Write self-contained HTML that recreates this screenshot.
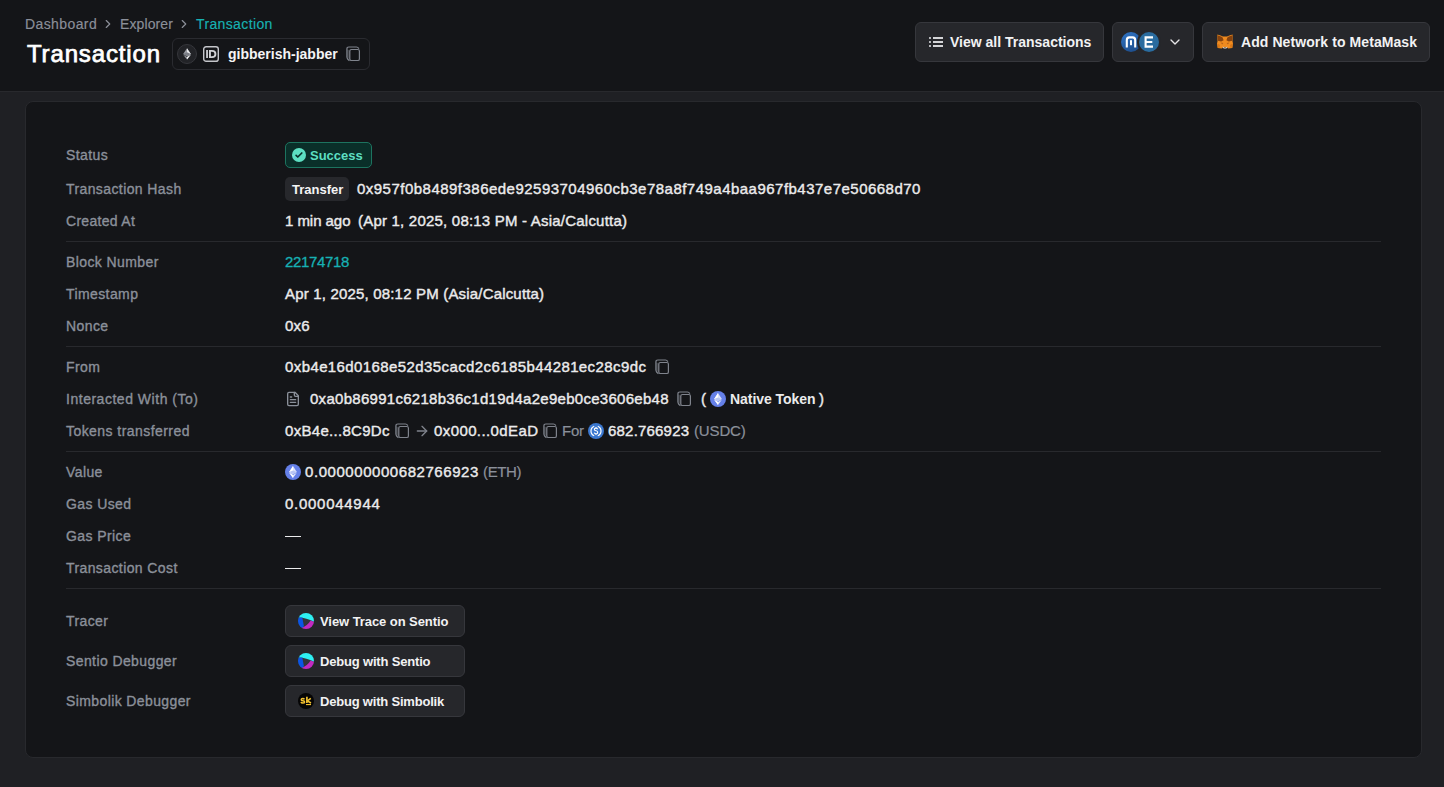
<!DOCTYPE html>
<html><head><meta charset="utf-8">
<style>
*{margin:0;padding:0;box-sizing:border-box}
html,body{width:1444px;height:787px;overflow:hidden;background:#1f2024;font-family:"Liberation Sans",sans-serif;color:#ececec}
.a{position:absolute;white-space:nowrap}
#hdr{position:absolute;left:0;top:0;width:1444px;height:92px;background:#141518;border-bottom:1px solid #28292d}
#card{position:absolute;left:25px;top:101px;width:1397px;height:657px;background:#141518;border:1px solid #28292d;border-radius:8px}
.crumb{font-size:14px;line-height:20px;color:#8b8f98;-webkit-text-stroke:0.15px #8b8f98}
.btn{position:absolute;top:22px;height:40px;background:#26272b;border:1px solid #36373c;border-radius:6px}
.btxt{font-size:14px;font-weight:bold;line-height:20px;color:#f2f2f3}
.lbl{font-size:14px;line-height:20px;color:#8b909a;-webkit-text-stroke:0.35px #8b909a}
.val{font-size:14px;line-height:20px;color:#ebebec;-webkit-text-stroke:0.4px #ebebec}
.mono{font-family:"Liberation Mono",monospace;font-size:14px;line-height:20px;color:#ebebec;-webkit-text-stroke:0.2px #ebebec}
.sep{position:absolute;left:66px;width:1315px;height:1px;background:#28292d}
.gray{color:#8b909a;-webkit-text-stroke:0.2px #8b909a}
.tbtn{position:absolute;left:285px;width:180px;height:32px;background:#26272b;border:1px solid #36373c;border-radius:6px}
</style></head><body>
<div id="hdr"></div>

<div class="a crumb" style="left:25px;top:14px;letter-spacing:0.4px">Dashboard</div>
<svg class="a" style="left:101px;top:17px" width="14" height="14" viewBox="0 0 24 24" fill="none" stroke="#8b8f98" stroke-width="2" stroke-linecap="round" stroke-linejoin="round"><path d="m9 18 6-6-6-6"/></svg>
<div class="a crumb" style="left:120px;top:14px;letter-spacing:0.1px">Explorer</div>
<svg class="a" style="left:177px;top:17px" width="14" height="14" viewBox="0 0 24 24" fill="none" stroke="#8b8f98" stroke-width="2" stroke-linecap="round" stroke-linejoin="round"><path d="m9 18 6-6-6-6"/></svg>
<div class="a crumb" style="left:196px;top:14px;color:#17b1b3;-webkit-text-stroke:0.15px #17b1b3;letter-spacing:0.37px">Transaction</div>
<div class="a" style="left:27px;top:39px;font-size:24px;line-height:30px;color:#fff;-webkit-text-stroke:0.75px #fff;letter-spacing:0.85px">Transaction</div>
<div class="a" style="left:172px;top:38px;width:198px;height:32px;border:1px solid #2a2b30;border-radius:6px"></div>
<div class="a" style="left:177px;top:44px;width:20px;height:20px;border-radius:50%;background:#222327;border:1px solid #35363b"></div>
<svg class="a" style="left:183px;top:48px" width="8" height="12" viewBox="0 0 8 12"><path d="M4 0.3 L7.8 6 L4 8.2 L0.2 6 Z" fill="#9a9ca3"/><path d="M4 0.3 L7.8 6 L4 8.2 Z" fill="#e8e9ec"/><path d="M4 8.9 L7.8 6.7 L4 11.6 L0.2 6.7 Z" fill="#9a9ca3"/><path d="M4 8.9 L7.8 6.7 L4 11.6 Z" fill="#f2f2f4"/><path d="M0.2 6 L4 4.3 L7.8 6 L4 8.2 Z" fill="#7b7e86"/></svg>
<svg class="a" style="left:203px;top:46px" width="16" height="16" viewBox="0 0 16 16"><rect x="0.7" y="0.7" width="14.6" height="14.6" rx="2.4" fill="none" stroke="#c4c5ca" stroke-width="1.4"/><rect x="3.1" y="4" width="1.9" height="8" fill="#c4c5ca"/><path d="M6 4 H9 Q13.4 4 13.4 8 Q13.4 12 9 12 H6 Z M7.9 5.8 V10.2 H9 Q11.5 10.2 11.5 8 Q11.5 5.8 9 5.8 Z" fill="#d0d1d5" fill-rule="evenodd"/></svg>
<div class="a btxt" style="left:228px;top:44px;color:#f4f4f5">gibberish-jabber</div>
<svg class="a" style="left:345px;top:46px" width="16" height="16" viewBox="0 0 16 16" fill="none" stroke="#7f838c" stroke-width="1.2" stroke-linejoin="round"><path d="M1.9 3.2 L4.8 4.6 V13.6 L1.9 11.4 Z" fill="#7f838c" fill-opacity="0.35" stroke="none"/><path d="M1.9 11.4 V3 Q1.9 1 3.9 1 H11.4 Q12.8 1 13.9 2.6"/><path d="M1.9 11.4 Q2.2 13.2 4.4 14.8"/><rect x="4.8" y="3.5" width="9.6" height="11" rx="1.6" fill="#141518"/></svg>
<div class="btn" style="left:915px;width:189px"></div>
<svg class="a" style="left:927px;top:34px" width="18" height="16" viewBox="0 0 18 16"><rect x="2" y="3" width="2" height="2" fill="#b4b5b9"/><rect x="2" y="7" width="2" height="2" fill="#b4b5b9"/><rect x="2" y="11" width="2" height="2" fill="#b4b5b9"/><rect x="6" y="3" width="10" height="2" fill="#d4d5d8"/><rect x="6" y="7" width="10" height="2" fill="#d4d5d8"/><rect x="6" y="11" width="10" height="2" fill="#d4d5d8"/></svg>
<div class="a btxt" style="left:950px;top:32px">View all Transactions</div>
<div class="btn" style="left:1112px;width:82px"></div>
<div class="a" style="left:1121px;top:32px;width:20px;height:20px;border-radius:50%;background:linear-gradient(160deg,#2f74c6,#1c4a86)"></div>
<svg class="a" style="left:1121px;top:32px" width="20" height="20" viewBox="0 0 20 20"><path d="M5.8 15.5 V8.2 Q5.8 5.4 8.3 5.4 H11.7 Q14.2 5.4 14.2 8.2 V15.5" fill="none" stroke="#fff" stroke-width="2.1"/><rect x="9" y="8.2" width="2" height="5" fill="#fff"/></svg>
<div class="a" style="left:1137px;top:30px;width:24px;height:24px;border-radius:50%;background:#26272b"></div>
<div class="a" style="left:1139px;top:32px;width:20px;height:20px;border-radius:50%;background:#2a6c9f"></div>
<svg class="a" style="left:1139px;top:32px" width="20" height="20" viewBox="0 0 20 20"><path d="M14 5.4 H6.6 V14.6 H14 M6.6 10 H13.3" fill="none" stroke="#fff" stroke-width="2.1"/></svg>
<svg class="a" style="left:1167px;top:34px" width="16" height="16" viewBox="0 0 24 24" fill="none" stroke="#e6e6e8" stroke-width="2" stroke-linecap="round" stroke-linejoin="round"><path d="m6 9 6 6 6-6"/></svg>
<div class="btn" style="left:1202px;width:228px"></div>
<svg class="a" style="left:1217px;top:34px" width="16" height="15" viewBox="0 0 16 15">
<path d="M0.4 0.4 Q4 1.2 6 2.6 H10 Q12 1.2 15.6 0.4 L15.5 7.2 L16 9.4 L15.3 14 L11.3 14.5 L9.8 13.2 H6.2 L4.7 14.5 L0.7 14 L0 9.4 L0.5 7.2 Z" fill="#ef8b1f"/>
<path d="M0.6 1.2 Q3.5 2.2 5.6 3.6 L6.6 6.2 L4.2 7.4 L0.8 6.8 Z" fill="#86430f"/><path d="M15.4 1.2 Q12.5 2.2 10.4 3.6 L9.4 6.2 L11.8 7.4 L15.2 6.8 Z" fill="#86430f"/>
<path d="M3.6 8.6 L6.4 8.9 L5.2 10.6 Z" fill="#b8641a"/><path d="M12.4 8.6 L9.6 8.9 L10.8 10.6 Z" fill="#b8641a"/>
<path d="M0.4 9.6 L3 11 L2.6 13.8 L0.7 13.8 Z" fill="#d97716"/><path d="M15.6 9.6 L13 11 L13.4 13.8 L15.3 13.8 Z" fill="#d97716"/>
<path d="M5.6 12.5 Q8 14.8 10.4 12.5 L10 13.9 Q8 15.2 6 13.9 Z" fill="#e3d9cf"/>
</svg>
<div class="a btxt" style="left:1241px;top:32px;letter-spacing:0.08px">Add Network to MetaMask</div>
<div id="card"></div>
<div class="a lbl" style="left:66px;top:145px;letter-spacing:0.4px">Status</div>
<div class="a lbl" style="left:66px;top:179px;letter-spacing:0.4px">Transaction Hash</div>
<div class="a lbl" style="left:66px;top:211px;letter-spacing:0.3px">Created At</div>
<div class="a lbl" style="left:66px;top:252px;letter-spacing:0.4px">Block Number</div>
<div class="a lbl" style="left:66px;top:284px;letter-spacing:0.4px">Timestamp</div>
<div class="a lbl" style="left:66px;top:316px;letter-spacing:0.4px">Nonce</div>
<div class="a lbl" style="left:66px;top:357px;letter-spacing:0.4px">From</div>
<div class="a lbl" style="left:66px;top:389px;letter-spacing:0.52px">Interacted With (To)</div>
<div class="a lbl" style="left:66px;top:421px;letter-spacing:0.44px">Tokens transferred</div>
<div class="a lbl" style="left:66px;top:462px;letter-spacing:0.4px">Value</div>
<div class="a lbl" style="left:66px;top:494px;letter-spacing:0.4px">Gas Used</div>
<div class="a lbl" style="left:66px;top:526px;letter-spacing:0.4px">Gas Price</div>
<div class="a lbl" style="left:66px;top:558px;letter-spacing:0.4px">Transaction Cost</div>
<div class="a lbl" style="left:66px;top:611px;letter-spacing:0.4px">Tracer</div>
<div class="a lbl" style="left:66px;top:651px;letter-spacing:0.4px">Sentio Debugger</div>
<div class="a lbl" style="left:66px;top:691px;letter-spacing:0.39px">Simbolik Debugger</div>
<div class="sep" style="top:241px"></div>
<div class="sep" style="top:346px"></div>
<div class="sep" style="top:451px"></div>
<div class="sep" style="top:588px"></div>
<div class="a" style="left:285px;top:142px;width:87px;height:26px;background:#0a2f29;border:1px solid #1d735f;border-radius:5px"></div>
<svg class="a" style="left:292px;top:148px" width="14" height="14" viewBox="0 0 14 14"><circle cx="7" cy="7" r="7" fill="#5ddfc2"/><path d="M4.1 7.4 L5.8 9 L9.8 5" fill="none" stroke="#0a2f29" stroke-width="1.7" stroke-linecap="round" stroke-linejoin="round"/></svg>
<div class="a" style="left:310px;top:146px;font-size:13px;line-height:20px;font-weight:bold;color:#5ddfc2">Success</div>
<div class="a" style="left:285px;top:177px;width:64px;height:24px;background:#27282c;border-radius:5px"></div>
<div class="a" style="left:292px;top:180px;font-size:13px;line-height:20px;font-weight:bold;color:#f4f4f5">Transfer</div>
<div class="a val" style="left:357px;top:179px;font-size:15px;letter-spacing:0.48px">0x957f0b8489f386ede92593704960cb3e78a8f749a4baa967fb437e7e50668d70</div>
<div class="a val" style="left:285px;top:211px;font-size:15px;letter-spacing:-0.05px;">1 min ago</div>
<div class="a val" style="left:358px;top:211px;font-size:15px;letter-spacing:0.21px;">(Apr 1, 2025, 08:13 PM - Asia/Calcutta)</div>
<div class="a val" style="left:285px;top:252px;font-size:15px;letter-spacing:-0.33px;color:#17b1b3;-webkit-text-stroke:0.3px #17b1b3">22174718</div>
<div class="a val" style="left:285px;top:284px;font-size:15px;letter-spacing:0.18px;">Apr 1, 2025, 08:12 PM (Asia/Calcutta)</div>
<div class="a val" style="left:285px;top:316px;font-size:15px;letter-spacing:0.25px;">0x6</div>
<div class="a val" style="left:285px;top:357px;font-size:15px;letter-spacing:0.4px;">0xb4e16d0168e52d35cacd2c6185b44281ec28c9dc</div>
<svg class="a" style="left:654px;top:359px" width="16" height="16" viewBox="0 0 16 16" fill="none" stroke="#7f838c" stroke-width="1.2" stroke-linejoin="round"><path d="M1.9 3.2 L4.8 4.6 V13.6 L1.9 11.4 Z" fill="#7f838c" fill-opacity="0.35" stroke="none"/><path d="M1.9 11.4 V3 Q1.9 1 3.9 1 H11.4 Q12.8 1 13.9 2.6"/><path d="M1.9 11.4 Q2.2 13.2 4.4 14.8"/><rect x="4.8" y="3.5" width="9.6" height="11" rx="1.6" fill="#141518"/></svg>
<svg class="a" style="left:285px;top:391px" width="16" height="16" viewBox="0 0 24 24" fill="none" stroke="#8b909a" stroke-width="2" stroke-linecap="round" stroke-linejoin="round"><path d="M15 2H6a2 2 0 0 0-2 2v16a2 2 0 0 0 2 2h12a2 2 0 0 0 2-2V7Z"/><path d="M14 2v4a2 2 0 0 0 2 2h4"/><path d="M10 9H8"/><path d="M16 13H8"/><path d="M16 17H8"/></svg>
<div class="a val" style="left:310px;top:389px;font-size:15px;letter-spacing:0.28px;">0xa0b86991c6218b36c1d19d4a2e9eb0ce3606eb48</div>
<svg class="a" style="left:676px;top:391px" width="16" height="16" viewBox="0 0 16 16" fill="none" stroke="#7f838c" stroke-width="1.2" stroke-linejoin="round"><path d="M1.9 3.2 L4.8 4.6 V13.6 L1.9 11.4 Z" fill="#7f838c" fill-opacity="0.35" stroke="none"/><path d="M1.9 11.4 V3 Q1.9 1 3.9 1 H11.4 Q12.8 1 13.9 2.6"/><path d="M1.9 11.4 Q2.2 13.2 4.4 14.8"/><rect x="4.8" y="3.5" width="9.6" height="11" rx="1.6" fill="#141518"/></svg>
<div class="a val" style="left:701px;top:389px;font-size:15px">(</div>
<svg class="a" style="left:710px;top:391px" width="16" height="16" viewBox="0 0 16 16"><circle cx="8" cy="8" r="8" fill="#6580e8"/><path d="M8 2 L11.8 8.1 L8 10.3 L4.2 8.1 Z" fill="#dfe5fb"/><path d="M8 2 L4.2 8.1 L8 10.3 Z" fill="#fff"/><path d="M8 11 L11.8 8.8 L8 13.9 L4.2 8.8 Z" fill="#e4e9fc"/><path d="M8 11 L4.2 8.8 L8 13.9 Z" fill="#fff"/><path d="M4.2 8.1 L8 6.4 L11.8 8.1 L8 10.3 Z" fill="#b9c6f5"/></svg>
<div class="a val" style="left:730px;top:389px;font-weight:bold;-webkit-text-stroke:0;letter-spacing:-0.05px">Native Token</div>
<div class="a val" style="left:819px;top:389px;font-size:15px">)</div>
<div class="a val" style="left:285px;top:421px;font-size:15px;letter-spacing:0.3px;">0xB4e...8C9Dc</div>
<svg class="a" style="left:394px;top:423px" width="16" height="16" viewBox="0 0 16 16" fill="none" stroke="#7f838c" stroke-width="1.2" stroke-linejoin="round"><path d="M1.9 3.2 L4.8 4.6 V13.6 L1.9 11.4 Z" fill="#7f838c" fill-opacity="0.35" stroke="none"/><path d="M1.9 11.4 V3 Q1.9 1 3.9 1 H11.4 Q12.8 1 13.9 2.6"/><path d="M1.9 11.4 Q2.2 13.2 4.4 14.8"/><rect x="4.8" y="3.5" width="9.6" height="11" rx="1.6" fill="#141518"/></svg>
<svg class="a" style="left:414px;top:423px" width="16" height="16" viewBox="0 0 24 24" fill="none" stroke="#7f838c" stroke-width="2" stroke-linecap="round" stroke-linejoin="round"><path d="M5 12h14"/><path d="m12 5 7 7-7 7"/></svg>
<div class="a val" style="left:434px;top:421px;font-size:15px;letter-spacing:0.4px;">0x000...0dEaD</div>
<svg class="a" style="left:542px;top:423px" width="16" height="16" viewBox="0 0 16 16" fill="none" stroke="#7f838c" stroke-width="1.2" stroke-linejoin="round"><path d="M1.9 3.2 L4.8 4.6 V13.6 L1.9 11.4 Z" fill="#7f838c" fill-opacity="0.35" stroke="none"/><path d="M1.9 11.4 V3 Q1.9 1 3.9 1 H11.4 Q12.8 1 13.9 2.6"/><path d="M1.9 11.4 Q2.2 13.2 4.4 14.8"/><rect x="4.8" y="3.5" width="9.6" height="11" rx="1.6" fill="#141518"/></svg>
<div class="a val gray" style="left:562px;top:421px;font-size:15px;letter-spacing:-0.2px;">For</div>
<svg class="a" style="left:588px;top:423px" width="16" height="16" viewBox="0 0 16 16"><circle cx="8" cy="8" r="8" fill="#3b78d0"/><path d="M6.2 3.2 A5.2 5.2 0 0 0 6.2 12.8" fill="none" stroke="#fff" stroke-width="1.2"/><path d="M9.8 3.2 A5.2 5.2 0 0 1 9.8 12.8" fill="none" stroke="#fff" stroke-width="1.2"/><path d="M9.6 6.2 Q9.2 5.1 8 5.1 Q6.4 5.1 6.4 6.4 Q6.4 7.5 8 7.8 Q9.7 8.1 9.7 9.4 Q9.7 10.8 8 10.8 Q6.6 10.8 6.3 9.7 M8 4.1 V5.1 M8 10.8 V11.9" fill="none" stroke="#fff" stroke-width="1.1"/></svg>
<div class="a val" style="left:608px;top:421px;font-size:15px;letter-spacing:0.2px;">682.766923</div>
<div class="a val gray" style="left:694px;top:421px;font-size:15px;letter-spacing:-0.15px;">(USDC)</div>
<svg class="a" style="left:285px;top:464px" width="16" height="16" viewBox="0 0 16 16"><circle cx="8" cy="8" r="8" fill="#6580e8"/><path d="M8 2 L11.8 8.1 L8 10.3 L4.2 8.1 Z" fill="#dfe5fb"/><path d="M8 2 L4.2 8.1 L8 10.3 Z" fill="#fff"/><path d="M8 11 L11.8 8.8 L8 13.9 L4.2 8.8 Z" fill="#e4e9fc"/><path d="M8 11 L4.2 8.8 L8 13.9 Z" fill="#fff"/><path d="M4.2 8.1 L8 6.4 L11.8 8.1 L8 10.3 Z" fill="#b9c6f5"/></svg>
<div class="a val" style="left:305px;top:462px;font-size:15px;letter-spacing:0.56px;">0.000000000682766923</div>
<div class="a val gray" style="left:483px;top:462px;font-size:15px;letter-spacing:-0.35px;">(ETH)</div>
<div class="a val" style="left:285px;top:494px;font-size:15px;letter-spacing:0.72px;">0.000044944</div>
<div class="a" style="left:285px;top:535.8px;width:16px;height:1.5px;background:#ebebec"></div>
<div class="a" style="left:285px;top:567.8px;width:16px;height:1.5px;background:#ebebec"></div>
<div class="tbtn" style="top:605px"></div>
<svg class="a" style="left:298px;top:613px" width="16" height="16" viewBox="0 0 16 16"><defs><clipPath id="sc0"><circle cx="8" cy="8" r="8"/></clipPath></defs><g clip-path="url(#sc0)"><rect width="16" height="16" fill="#33353b"/><path d="M-1 -1 H17 V9.2 Q9 4.6 0.5 4.4 H-1 Z" fill="#2ef0f2"/><path d="M-1 4.4 H4.3 L5.9 13.3 L2.6 17 H-1 Z" fill="#0b55e4"/><path d="M2.4 15.6 Q9.5 13 12.6 7.5 L17 9 V17 H0 Z" fill="#c22ac2"/></g></svg>
<div class="a btxt" style="left:320px;top:612px;font-size:13px;letter-spacing:-0.07px">View Trace on Sentio</div>
<div class="tbtn" style="top:645px"></div>
<svg class="a" style="left:298px;top:653px" width="16" height="16" viewBox="0 0 16 16"><defs><clipPath id="sc1"><circle cx="8" cy="8" r="8"/></clipPath></defs><g clip-path="url(#sc1)"><rect width="16" height="16" fill="#33353b"/><path d="M-1 -1 H17 V9.2 Q9 4.6 0.5 4.4 H-1 Z" fill="#2ef0f2"/><path d="M-1 4.4 H4.3 L5.9 13.3 L2.6 17 H-1 Z" fill="#0b55e4"/><path d="M2.4 15.6 Q9.5 13 12.6 7.5 L17 9 V17 H0 Z" fill="#c22ac2"/></g></svg>
<div class="a btxt" style="left:320px;top:652px;font-size:13px;letter-spacing:-0.18px">Debug with Sentio</div>
<div class="tbtn" style="top:685px"></div>
<svg class="a" style="left:298px;top:693px" width="16" height="16" viewBox="0 0 16 16"><circle cx="8" cy="8" r="8" fill="#050505"/><path d="M6.4 6.3 Q6 5.5 4.8 5.5 Q3.2 5.5 3.2 6.7 Q3.2 7.6 4.8 7.8 Q6.6 8 6.6 8.9 Q6.6 10 4.8 10 Q3.3 10 3 9" fill="none" stroke="#f2c230" stroke-width="1.5"/><path d="M8.9 3.8 V10" stroke="#f2c230" stroke-width="1.7"/><path d="M12.8 5.4 L9.4 7.9 L13 10" fill="none" stroke="#f2c230" stroke-width="1.6"/><rect x="8" y="11" width="5" height="1.1" fill="#f2c230"/></svg>
<div class="a btxt" style="left:320px;top:692px;font-size:13px;letter-spacing:-0.2px">Debug with Simbolik</div>
</body></html>
